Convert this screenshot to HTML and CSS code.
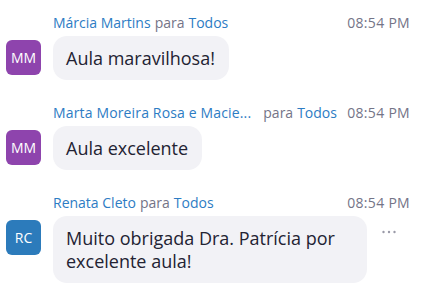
FILE: index.html
```html
<!DOCTYPE html>
<html lang="pt">
<head>
<meta charset="utf-8">
<link rel="stylesheet" href="styles.css">
</head>
<body>
<div class="chat">
  <div class="msg">
    <div class="head"><span class="name">Márcia Martins</span><span class="to">para</span><span class="all">Todos</span><span class="time">08:54 PM</span></div>
    <div class="avatar purple">MM</div>
    <div class="body"><div class="bubble">Aula maravilhosa!</div></div>
  </div>
  <div class="msg">
    <div class="head"><span class="name trunc">Marta Moreira Rosa e Macie...</span><span class="to">para</span><span class="all">Todos</span><span class="time">08:54 PM</span></div>
    <div class="avatar purple">MM</div>
    <div class="body"><div class="bubble">Aula excelente</div></div>
  </div>
  <div class="msg">
    <div class="head"><span class="name">Renata Cleto</span><span class="to">para</span><span class="all">Todos</span><span class="time">08:54 PM</span></div>
    <div class="avatar blue">RC</div>
    <div class="body"><div class="bubble">Muito obrigada Dra. Patrícia por excelente aula!</div>
      <svg class="more" width="14" height="4" viewBox="0 0 14 4"><circle cx="1.5" cy="2" r="1.2"/><circle cx="7" cy="2" r="1.2"/><circle cx="12.5" cy="2" r="1.2"/></svg>
    </div>
  </div>
</div>
</body>
</html>
```

FILE: styles.css
```css
html, body {
  margin: 0;
  padding: 0;
  background: #ffffff;
}
body {
  font-family: "Open Sans", "Noto Sans", sans-serif;
  color: #232333;
}
.chat {
  padding: 14px 18px 0 6px;
  display: flex;
  flex-direction: column;
  gap: 24px;
}
.msg {
  display: grid;
  grid-template-columns: 35px 1fr;
  column-gap: 12px;
  row-gap: 4px;
}
.head {
  grid-column: 2;
  grid-row: 1;
  display: flex;
  align-items: baseline;
  font-size: 14px;
  line-height: 18px;
  white-space: nowrap;
  min-width: 0;
}
.name {
  color: #2d7cc4;
  min-width: 0;
}
.trunc {
  padding-right: 8px;
  letter-spacing: 0.15px;
}
.to {
  color: #747487;
  margin-left: 4px;
  flex: none;
}
.all {
  color: #2d7cc4;
  margin-left: 4px;
  flex: none;
}
.time {
  color: #747487;
  margin-left: auto;
  padding-left: 7px;
  flex: none;
  letter-spacing: 0.3px;
}
.avatar {
  grid-column: 1;
  grid-row: 2;
  width: 35px;
  height: 35px;
  margin-top: 4px;
  border-radius: 6px;
  color: #fff;
  font-size: 14px;
  display: flex;
  align-items: center;
  justify-content: center;
}
.purple { background: #8e44ad; }
.blue { background: #2c7bbb; }
.body {
  grid-column: 2;
  grid-row: 2;
  display: flex;
  align-items: flex-start;
  gap: 15px;
}
.bubble {
  background: #f2f2f6;
  border-radius: 14px;
  padding: 11px 14px 10px 13px;
  font-size: 18px;
  line-height: 23px;
  max-width: 287px;
}
.more {
  fill: #9a9aa8;
  margin-top: 14px;
  flex: none;
}
```
